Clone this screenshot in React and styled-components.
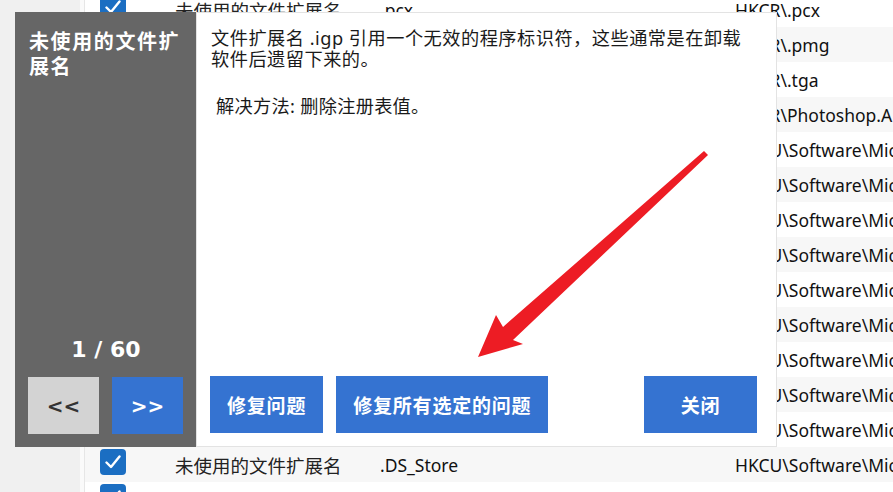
import React from 'react';
import styled, { createGlobalStyle } from 'styled-components';

const GlobalStyle = createGlobalStyle`
  html, body {
    margin: 0;
    padding: 0;
    background: #ffffff;
  }
  body {
    width: 893px;
    height: 492px;
    overflow: hidden;
    font-family: "Noto Sans", "Noto Sans CJK SC", sans-serif;
  }
`;

const KEY_SW = 'HKCU\\Software\\Microsoft\\Windows\\CurrentVersion\\Explorer\\FileExts';

const rows = [
  { ext: '.pcx', key: 'HKCR\\.pcx' },
  { ext: '.pmg', key: 'HKCR\\.pmg' },
  { ext: '.tga', key: 'HKCR\\.tga' },
  { ext: '.psd', key: 'HKCR\\Photoshop.Application' },
  { ext: '.ai', key: KEY_SW },
  { ext: '.eps', key: KEY_SW },
  { ext: '.igp', key: KEY_SW },
  { ext: '.pdd', key: KEY_SW },
  { ext: '.psb', key: KEY_SW },
  { ext: '.raw', key: KEY_SW },
  { ext: '.svgz', key: KEY_SW },
  { ext: '.tif', key: KEY_SW },
  { ext: '.wbm', key: KEY_SW },
  { ext: '.DS_Store', key: KEY_SW },
  { ext: '.xmp', key: KEY_SW },
];

export default function App() {
  return (
    <Page>
      <GlobalStyle />
      <Gutter />
      <Divider />
      <List>
        {rows.map((r, i) => (
          <Row key={i} striped={i % 2 === 1}>
            <Check>
              <svg width="16" height="14" viewBox="0 0 16 14">
                <path d="M1.5 7.5 L6 12 L14.5 1.5" fill="none" stroke="#fff" strokeWidth="2.4" strokeLinecap="round" strokeLinejoin="round" />
              </svg>
            </Check>
            <TypeCell>未使用的文件扩展名</TypeCell>
            <ExtCell>{r.ext}</ExtCell>
            <KeyCell>{r.key}</KeyCell>
          </Row>
        ))}
      </List>

      <Dialog>
        <SidePanel>
          <SideTitle>未使用的文件扩展名</SideTitle>
          <Counter>1 / 60</Counter>
          <NavRow>
            <NavButton>&lt;&lt;</NavButton>
            <NavButton primary>&gt;&gt;</NavButton>
          </NavRow>
        </SidePanel>
        <MainPane>
          <Description>
            文件扩展名 .igp 引用一个无效的程序标识符，这些通常是在卸载<br />
            软件后遗留下来的。
          </Description>
          <Solution>&nbsp;解决方法: 删除注册表值。</Solution>
          <ActionRow>
            <ActionButton>修复问题</ActionButton>
            <ActionButton>修复所有选定的问题</ActionButton>
            <ActionButton push>关闭</ActionButton>
          </ActionRow>
        </MainPane>
      </Dialog>

      <Arrow viewBox="0 0 893 492" width="893" height="492">
        <path d="M478 357 L496 315 L503 327 L704 151 L708 155 L513 340 L523 344 Z" fill="#ed1c24" />
      </Arrow>
    </Page>
  );
}

const Page = styled.div`
  position: relative;
  display: flex;
  width: 893px;
  height: 492px;
  overflow: hidden;
`;

const Gutter = styled.div`
  width: 80px;
  flex-shrink: 0;
  background: #f0f0f0;
`;

const Divider = styled.div`
  width: 4px;
  flex-shrink: 0;
  background: #fafafa;
  border-right: 1px solid #e6e6e6;
`;

const List = styled.div`
  flex: 1;
  min-width: 0;
  margin-top: -8px;
  display: flex;
  flex-direction: column;
`;

const Row = styled.div`
  height: 35px;
  flex-shrink: 0;
  display: flex;
  align-items: center;
  background: ${p => (p.striped ? '#f7f7f7' : '#ffffff')};
  white-space: nowrap;
`;

const Check = styled.div`
  width: 26px;
  height: 26px;
  margin: 0 0 5px 15px;
  border-radius: 4px;
  background: #1b6ec2;
  display: flex;
  align-items: center;
  justify-content: center;
  flex-shrink: 0;
`;

const TypeCell = styled.div`
  width: 205px;
  margin-left: 49px;
  flex-shrink: 0;
  font-family: "Noto Sans CJK SC", sans-serif;
  font-size: 18.5px;
  color: #222;
`;

const ExtCell = styled.div`
  width: 355px;
  flex-shrink: 0;
  font-size: 17.5px;
  color: #111;
`;

const KeyCell = styled.div`
  flex: 1;
  min-width: 0;
  overflow: hidden;
  font-size: 17.5px;
  color: #111;
`;

const Dialog = styled.div`
  position: absolute;
  left: 15px;
  top: 12px;
  width: 762px;
  height: 435px;
  display: flex;
  box-sizing: border-box;
`;

const SidePanel = styled.div`
  width: 181px;
  flex-shrink: 0;
  box-sizing: border-box;
  background: #666666;
  padding: 16px 13px 13px 14px;
  display: flex;
  flex-direction: column;
`;

const SideTitle = styled.div`
  font-family: "Noto Sans CJK SC", sans-serif;
  font-size: 20px;
  font-weight: 600;
  letter-spacing: 1.6px;
  line-height: 25px;
  color: #ffffff;
`;

const Counter = styled.div`
  margin-top: auto;
  margin-bottom: 14px;
  text-align: center;
  font-family: "DejaVu Sans", sans-serif;
  font-weight: 700;
  font-size: 22px;
  line-height: 26px;
  color: #ffffff;
`;

const NavRow = styled.div`
  display: flex;
  gap: 13px;
  margin-left: -1px;
`;

const NavButton = styled.button`
  width: 71px;
  height: 57px;
  border: none;
  padding: 0;
  background: ${p => (p.primary ? '#3573d1' : '#d3d3d3')};
  color: ${p => (p.primary ? '#ffffff' : '#333333')};
  font-family: "DejaVu Sans", sans-serif;
  font-weight: 700;
  font-size: 20px;
  letter-spacing: 0;
`;

const MainPane = styled.div`
  flex: 1;
  box-sizing: border-box;
  background: #ffffff;
  border: 1px solid #e3e3e3;
  padding: 15px 19px 13px 14px;
  display: flex;
  flex-direction: column;
`;

const Description = styled.p`
  margin: 0;
  font-size: 18.2px;
  letter-spacing: 0.5px;
  line-height: 21px;
  color: #1a1a1a;
`;

const Solution = styled.p`
  margin: 26px 0 0;
  font-size: 18.2px;
  letter-spacing: 0.3px;
  line-height: 21px;
  color: #1a1a1a;
`;

const ActionRow = styled.div`
  margin-top: auto;
  margin-left: -1px;
  display: flex;
  gap: 13px;
`;

const ActionButton = styled.button`
  height: 57px;
  min-width: 113px;
  padding: 0 17px;
  margin-left: ${p => (p.push ? 'auto' : '0')};
  border: none;
  background: #3573d1;
  color: #ffffff;
  font-family: "Noto Sans CJK SC", sans-serif;
  font-weight: 600;
  font-size: 19px;
  letter-spacing: 0.8px;
`;

const Arrow = styled.svg`
  position: absolute;
  left: 0;
  top: 0;
  pointer-events: none;
`;
